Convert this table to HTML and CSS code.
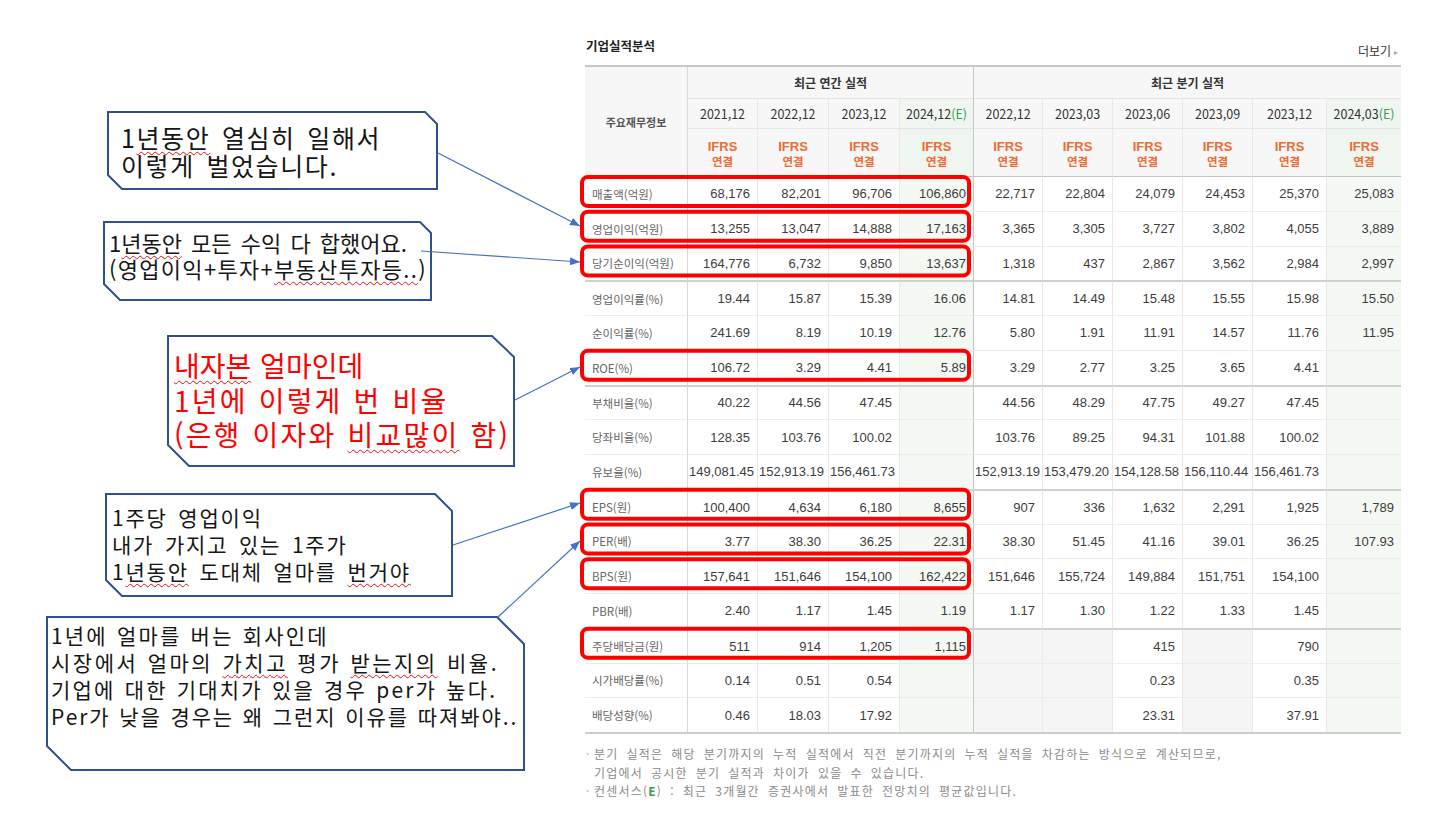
FILE: index.html
```html
<!DOCTYPE html>
<html lang="ko">
<head>
<meta charset="utf-8">
<title>기업실적분석</title>
<link rel="stylesheet" href="styles.css">
</head>
<body>
<div class="canvas">

  <section class="report">
    <div class="report-head">
      <h2 class="report-title">기업실적분석</h2>
      <a class="more">더보기<span class="more-arrow">▸</span></a>
    </div>

    <table class="perf">
      <colgroup>
        <col style="width:102px"><col style="width:70px"><col style="width:71px"><col style="width:71px"><col style="width:74px">
        <col style="width:69px"><col style="width:70px"><col style="width:70px"><col style="width:70px"><col style="width:74px"><col style="width:75px">
      </colgroup>
      <thead>
        <tr class="h1">
          <th class="lbl-h" rowspan="3">주요재무정보</th>
          <th class="grp ca" colspan="4">최근 연간 실적</th>
          <th class="grp cq" colspan="6">최근 분기 실적</th>
        </tr>
        <tr class="h2">
          <th class="ca">2021,12</th><th>2022,12</th><th>2023,12</th><th class="est">2024,12<span class="e">(E)</span></th>
          <th class="cq">2022,12</th><th>2023,03</th><th>2023,06</th><th>2023,09</th><th>2023,12</th><th class="est">2024,03<span class="e">(E)</span></th>
        </tr>
        <tr class="h3">
          <th class="ca"><span class="ifrs"><span class="ia">IFRS</span><span class="ib">연결</span></span></th>
          <th><span class="ifrs"><span class="ia">IFRS</span><span class="ib">연결</span></span></th>
          <th><span class="ifrs"><span class="ia">IFRS</span><span class="ib">연결</span></span></th>
          <th class="est"><span class="ifrs"><span class="ia">IFRS</span><span class="ib">연결</span></span></th>
          <th class="cq"><span class="ifrs"><span class="ia">IFRS</span><span class="ib">연결</span></span></th>
          <th><span class="ifrs"><span class="ia">IFRS</span><span class="ib">연결</span></span></th>
          <th><span class="ifrs"><span class="ia">IFRS</span><span class="ib">연결</span></span></th>
          <th><span class="ifrs"><span class="ia">IFRS</span><span class="ib">연결</span></span></th>
          <th><span class="ifrs"><span class="ia">IFRS</span><span class="ib">연결</span></span></th>
          <th class="est"><span class="ifrs"><span class="ia">IFRS</span><span class="ib">연결</span></span></th>
        </tr>
      </thead>
      <tbody class="g1">
        <tr><td class="lbl">매출액(억원)</td><td class="ca">68,176</td><td>82,201</td><td>96,706</td><td class="est">106,860</td><td class="cq">22,717</td><td>22,804</td><td>24,079</td><td>24,453</td><td>25,370</td><td class="est">25,083</td></tr>
        <tr><td class="lbl">영업이익(억원)</td><td class="ca">13,255</td><td>13,047</td><td>14,888</td><td class="est">17,163</td><td class="cq">3,365</td><td>3,305</td><td>3,727</td><td>3,802</td><td>4,055</td><td class="est">3,889</td></tr>
        <tr><td class="lbl">당기순이익(억원)</td><td class="ca">164,776</td><td>6,732</td><td>9,850</td><td class="est">13,637</td><td class="cq">1,318</td><td>437</td><td>2,867</td><td>3,562</td><td>2,984</td><td class="est">2,997</td></tr>
      </tbody>
      <tbody>
        <tr><td class="lbl">영업이익률(%)</td><td class="ca">19.44</td><td>15.87</td><td>15.39</td><td class="est">16.06</td><td class="cq">14.81</td><td>14.49</td><td>15.48</td><td>15.55</td><td>15.98</td><td class="est">15.50</td></tr>
        <tr><td class="lbl">순이익률(%)</td><td class="ca">241.69</td><td>8.19</td><td>10.19</td><td class="est">12.76</td><td class="cq">5.80</td><td>1.91</td><td>11.91</td><td>14.57</td><td>11.76</td><td class="est">11.95</td></tr>
        <tr><td class="lbl">ROE(%)</td><td class="ca">106.72</td><td>3.29</td><td>4.41</td><td class="est">5.89</td><td class="cq">3.29</td><td>2.77</td><td>3.25</td><td>3.65</td><td>4.41</td><td class="est"></td></tr>
      </tbody>
      <tbody>
        <tr><td class="lbl">부채비율(%)</td><td class="ca">40.22</td><td>44.56</td><td>47.45</td><td class="est"></td><td class="cq">44.56</td><td>48.29</td><td>47.75</td><td>49.27</td><td>47.45</td><td class="est"></td></tr>
        <tr><td class="lbl">당좌비율(%)</td><td class="ca">128.35</td><td>103.76</td><td>100.02</td><td class="est"></td><td class="cq">103.76</td><td>89.25</td><td>94.31</td><td>101.88</td><td>100.02</td><td class="est"></td></tr>
        <tr><td class="lbl">유보율(%)</td><td class="ca">149,081.45</td><td>152,913.19</td><td>156,461.73</td><td class="est"></td><td class="cq">152,913.19</td><td>153,479.20</td><td>154,128.58</td><td>156,110.44</td><td>156,461.73</td><td class="est"></td></tr>
      </tbody>
      <tbody>
        <tr><td class="lbl">EPS(원)</td><td class="ca">100,400</td><td>4,634</td><td>6,180</td><td class="est">8,655</td><td class="cq">907</td><td>336</td><td>1,632</td><td>2,291</td><td>1,925</td><td class="est">1,789</td></tr>
        <tr><td class="lbl">PER(배)</td><td class="ca">3.77</td><td>38.30</td><td>36.25</td><td class="est">22.31</td><td class="cq">38.30</td><td>51.45</td><td>41.16</td><td>39.01</td><td>36.25</td><td class="est">107.93</td></tr>
        <tr><td class="lbl">BPS(원)</td><td class="ca">157,641</td><td>151,646</td><td>154,100</td><td class="est">162,422</td><td class="cq">151,646</td><td>155,724</td><td>149,884</td><td>151,751</td><td>154,100</td><td class="est"></td></tr>
        <tr><td class="lbl">PBR(배)</td><td class="ca">2.40</td><td>1.17</td><td>1.45</td><td class="est">1.19</td><td class="cq">1.17</td><td>1.30</td><td>1.22</td><td>1.33</td><td>1.45</td><td class="est"></td></tr>
      </tbody>
      <tbody>
        <tr><td class="lbl">주당배당금(원)</td><td class="ca">511</td><td>914</td><td>1,205</td><td class="est">1,115</td><td class="cq nd"></td><td class="nd"></td><td>415</td><td class="nd"></td><td>790</td><td class="est"></td></tr>
        <tr><td class="lbl">시가배당률(%)</td><td class="ca">0.14</td><td>0.51</td><td>0.54</td><td class="est"></td><td class="cq nd"></td><td class="nd"></td><td>0.23</td><td class="nd"></td><td>0.35</td><td class="est"></td></tr>
        <tr><td class="lbl">배당성향(%)</td><td class="ca">0.46</td><td>18.03</td><td>17.92</td><td class="est"></td><td class="cq nd"></td><td class="nd"></td><td>23.31</td><td class="nd"></td><td>37.91</td><td class="est"></td></tr>
      </tbody>
    </table>

    <ul class="notes">
      <li><span class="nl">분기 실적은 해당 분기까지의 누적 실적에서 직전 분기까지의 누적 실적을 차감하는 방식으로 계산되므로,</span><span class="nl">기업에서 공시한 분기 실적과 차이가 있을 수 있습니다.</span></li>
      <li><span class="nl">컨센서스(<b class="e">E</b>) : 최근 3개월간 증권사에서 발표한 전망치의 평균값입니다.</span></li>
    </ul>
  </section>

  <div class="callout c1">
    <svg class="frame" width="331" height="79" viewBox="0 0 331 79"><polygon points="1,1 318,1 330,13 330,78 15,78 1,64"/></svg>
    <p class="txt"><span class="ln">1<span class="sp">년동안</span> 열심히 일해서</span><span class="ln">이렇게 벌었습니다.</span></p>
  </div>

  <div class="callout c2">
    <svg class="frame" width="329" height="80" viewBox="0 0 329 80"><polygon points="1,1 317,1 328,12 328,79 17,79 1,63"/></svg>
    <p class="txt"><span class="ln">1<span class="sp">년동안</span> 모든 수익 다 합했어요.</span><span class="ln l2">(영업이익+투자+<span class="sp">부동산투자등..</span>)</span></p>
  </div>

  <div class="callout c3">
    <svg class="frame" width="348" height="132" viewBox="0 0 348 132"><polygon points="1,1 325,1 347,22 347,131 22,131 1,110"/></svg>
    <p class="txt"><span class="ln"><span class="sp">내자본</span> 얼마인데</span><span class="ln l2">1년에 이렇게 번 비율</span><span class="ln l3">(은행 이자와 <span class="sp">비교많이</span> 함)</span></p>
  </div>

  <div class="callout c4">
    <svg class="frame" width="348" height="104" viewBox="0 0 348 104"><polygon points="1,1 330,1 347,18 347,103 17,103 1,87"/></svg>
    <p class="txt"><span class="ln">1주당 영업이익</span><span class="ln">내가 가지고 있는 1주가</span><span class="ln">1<span class="sp">년동안</span> 도대체 얼마를 <span class="sp">번거야</span></span></p>
  </div>

  <div class="callout c5">
    <svg class="frame" width="479" height="155" viewBox="0 0 479 155"><polygon points="1,1 451,1 478,28 478,154 25,154 1,130"/></svg>
    <p class="txt"><span class="ln l1">1년에 얼마를 버는 회사인데</span><span class="ln l2">시장에서 얼마의 <span class="sp">가치고</span> 평가 <span class="sp">받는지의</span> 비율.</span><span class="ln l3">기업에 대한 기대치가 있을 경우 per가 높다.</span><span class="ln l4">Per가 낮을 경우는 왜 그런지 이유를 따져봐야..</span></p>
  </div>

  <svg class="overlay" width="1451" height="822" viewBox="0 0 1451 822">
    <defs>
      <marker id="ah" markerUnits="userSpaceOnUse" markerWidth="10" markerHeight="8" refX="10" refY="4" orient="auto">
        <path d="M0,0 L10,4 L0,8 Z" fill="#4472c4"/>
      </marker>
    </defs>
    <g class="hl">
      <rect x="582" y="177" width="387" height="29" rx="6"/>
      <rect x="582" y="211.75" width="387" height="29" rx="6"/>
      <rect x="582" y="246.5" width="387" height="29" rx="6"/>
      <rect x="582" y="350.75" width="387" height="29" rx="6"/>
      <rect x="582" y="489.75" width="387" height="29" rx="6"/>
      <rect x="582" y="524.5" width="387" height="29" rx="6"/>
      <rect x="582" y="559.25" width="387" height="29" rx="6"/>
      <rect x="582" y="628.75" width="387" height="29" rx="6"/>
    </g>
    <g class="arrows">
      <line x1="438" y1="153" x2="580" y2="226" marker-end="url(#ah)"/>
      <line x1="421" y1="251" x2="580" y2="262" marker-end="url(#ah)"/>
      <line x1="515" y1="400" x2="580" y2="367" marker-end="url(#ah)"/>
      <line x1="453" y1="545" x2="580" y2="503" marker-end="url(#ah)"/>
      <line x1="498" y1="617" x2="580" y2="541" marker-end="url(#ah)"/>
    </g>
  </svg>

</div>
</body>
</html>
```

FILE: styles.css
```css
html, body {
  margin: 0;
  padding: 0;
  background: #ffffff;
}

body {
  font-family: "Noto Sans CJK KR", "Noto Sans", sans-serif;
  color: #333333;
}

.canvas {
  position: relative;
  width: 1451px;
  height: 822px;
  overflow: hidden;
}

/* ---------- report block ---------- */
.report {
  width: 816px;
  margin-left: 585px;
  padding-top: 36px;
}

.report-head {
  display: flex;
  justify-content: space-between;
  align-items: flex-end;
  height: 29px;
}

.report-title {
  margin: 0 0 11px 1px;
  font-size: 12.5px;
  line-height: 16px;
  font-weight: 700;
  color: #222222;
}

.more {
  margin: 0 3px 5px 0;
  font-size: 12px;
  line-height: 16px;
  color: #333333;
  text-decoration: none;
}

.more-arrow {
  margin-left: 3px;
  font-size: 8px;
  color: #aaaaaa;
  vertical-align: 1px;
}

/* ---------- table ---------- */
.perf {
  width: 816px;
  table-layout: fixed;
  border-collapse: separate;
  border-spacing: 0;
  border-top: 2px solid #c8c8c8;
  border-bottom: 2px solid #cccccc;
  font-size: 12px;
}

.perf th,
.perf td {
  padding: 0;
  border-left: 1px solid #e8e8e8;
  white-space: nowrap;
  vertical-align: middle;
}

.perf th.lbl-h,
.perf td.lbl {
  border-left: none;
}

.perf .ca {
  border-left-color: #d8d8d8;
}

.perf .cq {
  border-left-color: #c6c6c6;
}

.perf thead th {
  background: #f7f7f7;
  font-weight: 400;
  color: #333333;
  text-align: center;
}

.perf thead th.est {
  background: #eff5ef;
}

.perf tr.h1 { height: 31px; }
.perf tr.h2 { height: 30px; }
.perf tr.h3 { height: 48px; }

.perf tr.h2 th {
  font-size: 12.5px;
}

.perf tr.h2 th,
.perf tr.h3 th {
  border-top: 1px solid #e4e4e4;
}

.perf th.grp {
  font-weight: 700;
  color: #333333;
}

.perf th.lbl-h {
  font-size: 11px;
  font-weight: 700;
  color: #555555;
}

.perf .e {
  color: #3c9a55;
  font-weight: 400;
}

.ifrs {
  display: inline-flex;
  flex-direction: column;
  align-items: center;
  font-weight: 700;
  color: #ee6a30;
}

.ifrs .ia {
  display: block;
  height: 14px;
  font-family: "Liberation Sans", sans-serif;
  font-size: 13px;
  line-height: 14px;
}

.ifrs .ib {
  display: block;
  height: 15px;
  font-family: "Noto Sans CJK KR", sans-serif;
  font-size: 11.5px;
  line-height: 15px;
}

.perf tbody tr {
  height: 34.75px;
}

.perf tbody td {
  border-top: 1px solid #ececec;
  font-family: "Liberation Sans", "Noto Sans CJK KR", sans-serif;
  font-size: 13px;
  color: #3d3d3d;
  text-align: right;
  padding: 0 7px 0 1px;
}

.perf tbody tr:first-child td {
  border-top: 2px solid #d0d0d0;
}

.perf tbody.g1 tr:first-child td {
  border-top: 1px solid #c4c4c4;
}

.perf tbody td.lbl {
  font-family: "Noto Sans CJK KR", sans-serif;
  font-size: 11.5px;
  color: #666666;
  text-align: left;
  padding: 0 0 0 7px;
}

.perf tbody td.est {
  background: #f4f9f4;
}

.perf tbody td.nd {
  background: #f5f5f5;
}

/* ---------- footnotes ---------- */
.notes {
  list-style: none;
  margin: 11px 0 0;
  padding: 0 0 0 9px;
  font-size: 12px;
  line-height: 18.5px;
  color: #8c8c8c;
  letter-spacing: 1.2px;
  word-spacing: 3.5px;
  white-space: nowrap;
}

.notes li {
  position: relative;
}

.notes li::before {
  content: "·";
  position: absolute;
  left: -8px;
  top: 0;
  color: #b0b0b0;
  letter-spacing: 0;
}

.notes .nl {
  display: block;
  height: 18.5px;
}

.notes .e {
  color: #3c9a55;
  font-weight: 700;
}

/* ---------- callouts (free canvas annotations) ---------- */
.callout {
  position: absolute;
  box-sizing: border-box;
  white-space: nowrap;
  color: #161616;
}

.callout .frame {
  position: absolute;
  left: 0;
  top: 0;
  overflow: visible;
}

.callout .frame polygon {
  fill: #ffffff;
  stroke: #2f528f;
  stroke-width: 2;
}

.callout .txt {
  position: relative;
  margin: 0;
}

.callout .ln {
  display: block;
}

.sp {
  display: inline-block;
  text-decoration: underline wavy #e01010;
  text-decoration-thickness: 1px;
  text-underline-offset: 3px;
  text-decoration-skip-ink: none;
}

.c1 {
  left: 107px;
  top: 111px;
  width: 331px;
  height: 79px;
  padding: 12px 0 0 14px;
  font-size: 25px;
  letter-spacing: 1.6px;
  word-spacing: 3px;
}

.c1 .ln { height: 28px; line-height: 28px; }

.c2 {
  left: 103px;
  top: 221px;
  width: 329px;
  height: 80px;
  padding: 8px 0 0 6px;
  font-size: 22px;
  word-spacing: 3px;
}

.c2 .ln { height: 26px; line-height: 26px; }
.c2 .l2 { letter-spacing: 1.3px; }

.c3 {
  left: 167px;
  top: 335px;
  width: 348px;
  height: 132px;
  padding: 13px 0 0 7px;
  font-size: 28px;
  word-spacing: 1px;
  color: #ff0000;
}

.c3 .ln { height: 34.5px; line-height: 34.5px; }
.c3 .l2 { letter-spacing: 2.2px; }
.c3 .l3 { letter-spacing: 2.2px; }

.c4 {
  left: 105px;
  top: 493px;
  width: 348px;
  height: 104px;
  padding: 11px 0 0 7px;
  font-size: 21px;
  letter-spacing: 1.8px;
  word-spacing: 3px;
}

.c4 .ln { height: 27px; line-height: 27px; }

.c5 {
  left: 46px;
  top: 616px;
  width: 479px;
  height: 155px;
  padding: 6px 0 0 5px;
  font-size: 21px;
  word-spacing: 1px;
}

.c5 .ln { height: 27px; line-height: 27px; }
.c5 .l1 { letter-spacing: 2.2px; }
.c5 .l2 { letter-spacing: 2.5px; }
.c5 .l3 { letter-spacing: 2.2px; }
.c5 .l4 { letter-spacing: 1.9px; }

/* ---------- overlay: highlights and arrows ---------- */
.overlay {
  position: absolute;
  left: 0;
  top: 0;
  pointer-events: none;
}

.overlay .hl rect {
  fill: none;
  stroke: #ff0000;
  stroke-width: 4;
}

.overlay .arrows line {
  stroke: #4472c4;
  stroke-width: 1.2;
}
```
